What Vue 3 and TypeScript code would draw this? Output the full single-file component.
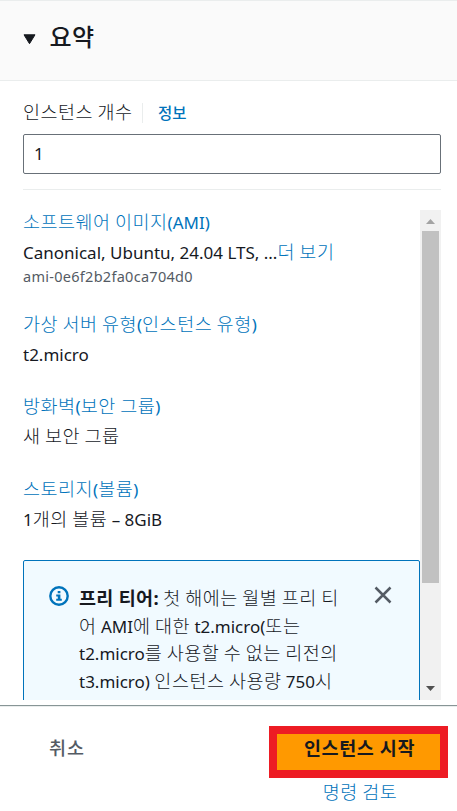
<script setup lang="ts">
import { h, ref, type FunctionalComponent } from 'vue'

interface SummaryItem {
  id: string
  label: string
  value: string
  more?: string
  detail?: string
}

// Hangul is set light and a little larger than the Latin text beside it.
const Mixed: FunctionalComponent<{ text: string }> = (props) =>
  (props.text.match(/[가-힣]+|[^가-힣]+/g) ?? []).map((run) =>
    h('span', { class: /[가-힣]/.test(run) ? 'ko' : 'latin' }, run),
  )
Mixed.props = ['text']

const count = ref('1')
const items: SummaryItem[] = [
  {
    id: 'ami',
    label: '소프트웨어 이미지(AMI)',
    value: 'Canonical, Ubuntu, 24.04 LTS, ...',
    more: '더 보기',
    detail: 'ami-0e6f2b2fa0ca704d0',
  },
  { id: 'type', label: '가상 서버 유형(인스턴스 유형)', value: 't2.micro' },
  { id: 'firewall', label: '방화벽(보안 그룹)', value: '새 보안 그룹' },
  { id: 'storage', label: '스토리지(볼륨)', value: '1개의 볼륨 – 8GiB' },
]
</script>

<template>
  <section class="panel">
    <header class="head">
      <svg class="caret" width="13" height="11" viewBox="0 0 13 11"><path d="M1 .8h11L6.5 9.7z" /></svg>
      <h2>요약</h2>
    </header>

    <div class="field">
      <div class="field-label">
        <label for="count"><Mixed text="인스턴스 개수" /></label>
        <a class="info">정보</a>
      </div>
      <input id="count" v-model="count" type="text" />
    </div>

    <div class="scroller">
      <div class="content">
        <div v-for="item in items" :key="item.id" class="item" :class="item.id">
          <a class="label"><Mixed :text="item.label" /></a>
          <div class="value"><Mixed :text="item.value" /><a v-if="item.more"><Mixed :text="item.more" /></a></div>
          <div v-if="item.detail" class="detail">{{ item.detail }}</div>
        </div>
        <div class="alert">
          <svg class="info-icon" width="20" height="20" viewBox="0 0 20 20">
            <circle cx="10" cy="10" r="8.7" fill="none" stroke="#0073bb" stroke-width="2.4" />
            <path d="M8.7 5h2.7v2.3H8.7zM7.2 8.5h4.2v4.300h1.400v2H7.200v-2h1.600v-2.300H7.200z" fill="#0073bb" />
          </svg>
          <p>
            <b>프리 티어:</b><Mixed text=" 첫 해에는 월별 프리 티" /><br />
            <Mixed text="어 AMI에 대한 t2.micro(또는" /><br />
            <Mixed text="t2.micro를 사용할 수 없는 리전의" /><br />
            <Mixed text="t3.micro) 인스턴스 사용량 750시" />
          </p>
          <svg class="close" width="18" height="18" viewBox="0 0 18 18"><path d="M1.500 1.500l15 15M16.500 1.500l-15 15" fill="none" stroke="#545b64" stroke-width="2.500" /></svg>
        </div>
      </div>
      <div class="bar">
        <svg width="21" height="21" viewBox="0 0 21 21"><path d="M6 14h9l-4.500-5z" fill="#a3a3a3" /></svg>
        <div class="thumb"></div>
        <svg class="down" width="21" height="21" viewBox="0 0 21 21"><path d="M6 7h9l-4.500 5z" fill="#505050" /></svg>
      </div>
    </div>

    <footer class="foot">
      <button class="cancel">취소</button>
      <div class="actions">
        <button class="launch">인스턴스 시작</button>
        <a class="review"><Mixed text="명령 검토" /></a>
      </div>
    </footer>
  </section>
</template>

<style>
body { background: #fff; }
.ko { font-size: 18.5px; font-weight: 300; letter-spacing: 0.5px; line-height: 1; }
.latin { white-space: pre; line-height: 1; }
</style>

<style scoped>
.panel {
  box-sizing: border-box;
  width: 457px;
  height: 811px;
  overflow: hidden;
  display: flex;
  flex-direction: column;
  font-family: "Noto Sans", "Noto Sans CJK KR", sans-serif;
  font-size: 17px;
  font-weight: 400;
  color: #16191f;
  white-space: nowrap;
}
a { color: #0073bb; }
button { border: 0; background: none; padding: 0; font: inherit; }
.head {
  box-sizing: border-box;
  height: 81px;
  flex: none;
  display: flex;
  align-items: center;
  gap: 14px;
  padding: 0 0 7px 22.5px;
  background: #fafafa;
  border-top: 1px solid #eaeded;
  border-bottom: 1px solid #eaeded;
}
.caret { fill: #16191f; stroke: #16191f; stroke-linejoin: round; margin-top: 4px; }
h2 { margin: 0; font-size: 24px; line-height: 30px; font-weight: 500; letter-spacing: 0.5px; }
.field {
  box-sizing: border-box;
  height: 109px;
  flex: none;
  margin: 0 16px 0 23px;
  padding-top: 19px;
  border-bottom: 1px solid #eaeded;
}
.field-label { display: flex; align-items: center; height: 24px; margin-bottom: 10px; }
.field-label label { width: 119px; padding-top: 1px; box-sizing: border-box; }
.info { border-left: 1px solid #eaeded; padding-left: 15px; font-size: 15.5px; line-height: 20px; font-weight: 500; margin-top: 2px; }
input {
  box-sizing: border-box;
  display: block;
  width: 418px;
  height: 40px;
  padding: 0 10px 2px;
  border: 1px solid #687078;
  border-radius: 2px;
  font: inherit;
  color: inherit;
  outline: none;
}
.scroller { height: 496px; flex: none; margin: 14px 16px 0 23px; display: flex; overflow: hidden; }
.content { width: 397px; flex: none; padding-top: 7px; }
.item { height: 82px; }
.item.ami { height: 102px; }
.item.firewall { height: 83px; }
.label { display: block; height: 24px; line-height: 24px; }
.value { height: 24px; line-height: 24px; margin-top: 6px; }
.detail { font-size: 14.5px; letter-spacing: 0.28px; line-height: 20px; margin-top: 1px; color: #545b64; }
.alert {
  box-sizing: border-box;
  height: 180px;
  display: flex;
  align-items: flex-start;
  padding: 25px 0 0 25px;
  border: 1px solid #0073bb;
  border-radius: 2px;
  background: #f1faff;
}
.info-icon { flex: none; }
.alert p { margin: -1px 0 0 10px; width: 295px; line-height: 27.5px; }
.alert b { font-size: 18.5px; font-weight: 700; letter-spacing: 0.3px; line-height: 1; }
.close { flex: none; }
.bar { width: 21px; margin-top: 6px; display: flex; flex-direction: column; background: #f1f1f1; }
.bar svg { display: block; flex: none; }
.thumb { width: 17px; height: 352px; margin-left: 2px; background: #c1c1c1; }
.bar .down { margin-top: auto; }
.foot {
  box-sizing: border-box;
  height: 106px;
  margin-top: 5px;
  flex: none;
  display: flex;
  justify-content: space-between;
  padding: 20px 9px 0 49px;
  border-top: 1px solid #879596;
  box-shadow: inset 0 1px #eaeded;
}
.cancel { height: 42px; font-size: 18.5px; letter-spacing: 1px; font-weight: 500; color: #545b64; }
.actions { width: 179px; display: flex; flex-direction: column; align-items: center; }
.launch {
  box-sizing: border-box;
  width: 179px;
  height: 52px;
  border: 8px solid #ed1c24;
  background: #ff9900;
  color: #16191f;
  font-size: 18.5px;
  letter-spacing: 0.6px;
  line-height: 28px;
  padding-bottom: 8px;
  padding-left: 2px;
  font-weight: 700;
}
.review { line-height: 26px; margin-top: 2px; margin-left: 3px; }
</style>
